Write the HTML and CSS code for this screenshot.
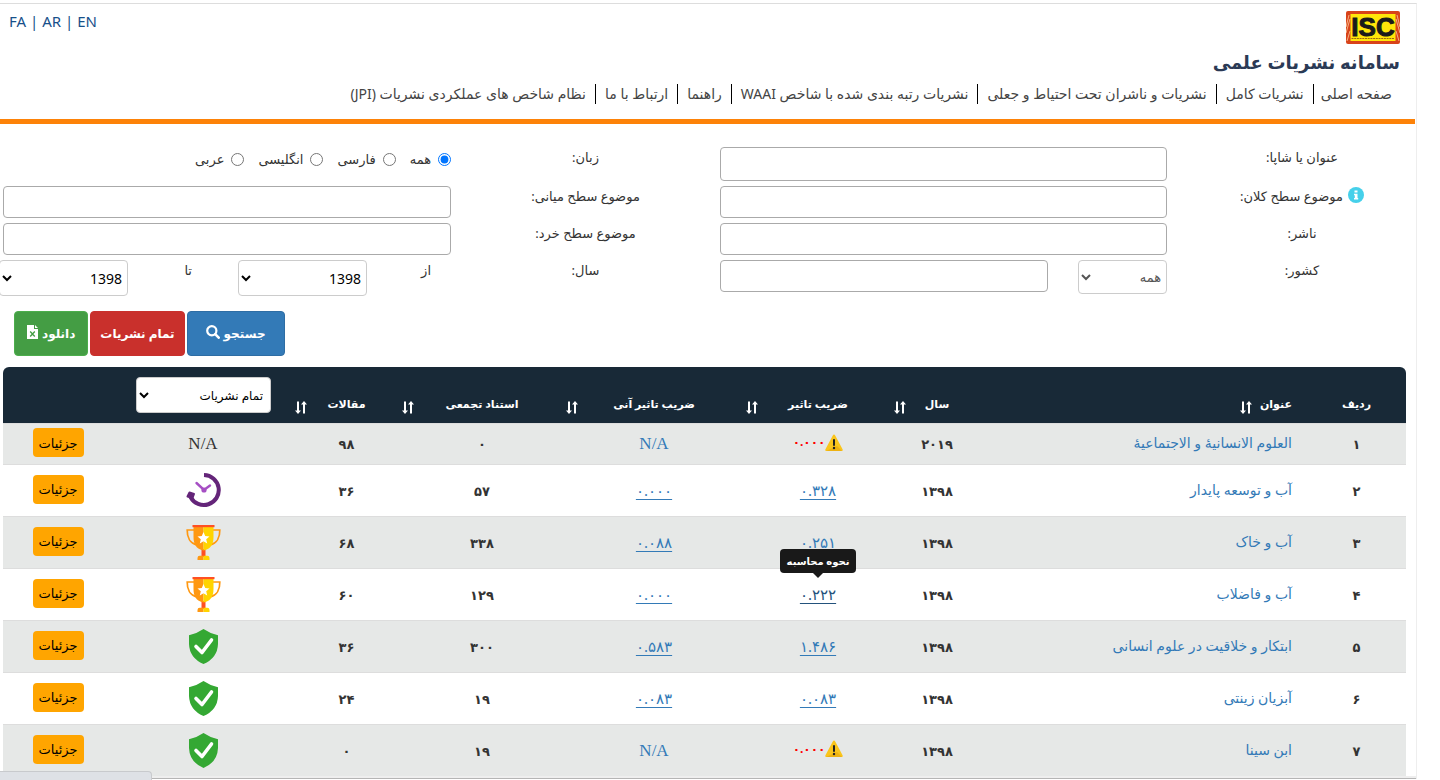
FILE: index.html
```html
<!DOCTYPE html>
<html lang="fa" dir="rtl">
<head>
<meta charset="utf-8">
<title>سامانه نشریات علمی</title>
<link rel="stylesheet" href="styles.css">
</head>
<body>
<svg class="defs" aria-hidden="true">
  <symbol id="sort" viewBox="0 0 12 13"><path d="M3 0.500V10M9 3V12.500" stroke="#fff" stroke-width="2" fill="none"/><path d="M0 9.500H6L3 13zM6 3.500H12L9 0z" fill="#fff"/></symbol>
  <symbol id="warn" viewBox="0 0 18 17"><path d="M9 0.500Q9.700 0.500 10.200 1.500L17.700 15.500Q18 17 16.800 17H1.200Q0 17 0.300 15.500L7.800 1.500Q8.300 0.500 9 0.500z" fill="#fac51c"/><path d="M1 17H17L12 12z" fill="#eeb211"/><path d="M9 6V11" stroke="#222" stroke-width="2" stroke-linecap="round"/><circle cx="9" cy="14" r="1.200" fill="#222"/></symbol>
  <symbol id="clock" viewBox="0 0 35 35"><path d="M18 2A15 15 0 1 1 4.500 24" fill="none" stroke="#642579" stroke-width="4"/><path d="M3.500 19.500L8 21L6.500 25L1.500 23.500z" fill="#642579" stroke="#642579" stroke-width="2" stroke-linejoin="round"/><path d="M10.500 10L18 17L24 12.500" fill="none" stroke="#a64fc4" stroke-width="2.400" stroke-linecap="round"/><circle cx="18" cy="17" r="2.600" fill="#a64fc4"/></symbol>
  <symbol id="cup" viewBox="0 0 35 35"><path d="M8 5H1.200C1 12 4 18.500 11 20" fill="none" stroke="#ff9811" stroke-width="1.700"/><path d="M27 5H33.800C34 12 31 18.500 24 20" fill="none" stroke="#ff9811" stroke-width="1.700"/><path d="M15.500 24H19.500V32H15.500z" fill="#ff5023"/><path d="M7.500 1.500H17.500V25.500C10 24 7.500 19 7.500 12z" fill="#ff9811"/><path d="M27.500 1.500H17.500V25.500C25 24 27.500 19 27.500 12z" fill="#ffd400"/><path d="M6.500 0H28.500V2.200H6.500z" fill="#ff5023"/><path d="M17.500 7L19.200 11L23.500 11.400L20.200 14.200L21.200 18.500L17.500 16.200L13.800 18.500L14.800 14.200L11.500 11.400L15.800 11z" fill="#fff"/><path d="M11.500 35V33Q11.500 30.800 13.700 30.800H17.500V35z" fill="#ff9811"/><path d="M23.500 35V33Q23.500 30.800 21.300 30.800H17.500V35z" fill="#ffd400"/></symbol>
  <symbol id="shield" viewBox="0 0 35 35"><path d="M17.500 0Q24 4.500 32 6.200V15Q31.500 29 17.500 35Q3.500 29 3 15V6.200Q11 4.500 17.500 0z" fill="#34a833"/><path d="M10 17.500L16 23.500L25.500 11" fill="none" stroke="#fff" stroke-width="3.600" stroke-linecap="round" stroke-linejoin="round"/></symbol>
</svg>
<div class="page">
  <header class="header">
    <div class="brand">
      <svg class="logo" viewBox="0 0 54 33" role="img" aria-label="ISC"><rect width="54" height="33" rx="2" fill="#d8431a"/><path d="M0 16L3 4M0 22L4 8M54 16L51 4M54 22L50 8M1 30L4 20M53 30L50 20" stroke="#f4b183" stroke-width="1"/><rect x="4.500" y="3" width="45" height="27" fill="#ffe60a"/><text x="27" y="25" text-anchor="middle" class="logo-text">ISC</text><path d="M5.500 27.500H48.500" stroke="#9a6a10" stroke-width="1.200" stroke-dasharray="2 0.700"/></svg>
      <h1 class="site-title">سامانه نشریات علمی</h1>
    </div>
    <div class="langs" dir="ltr"><a href="#">FA</a> | <a href="#">AR</a> | <a href="#">EN</a></div>
  </header>
  <nav class="nav">
    <a href="#">صفحه اصلی</a><a href="#">نشریات کامل</a><a href="#">نشریات و ناشران تحت احتیاط و جعلی</a><a href="#">نشریات رتبه بندی شده با شاخص WAAI</a><a href="#">راهنما</a><a href="#">ارتباط با ما</a><a href="#">نظام شاخص های عملکردی نشریات (JPI)</a>
  </nav>
  <form class="search">
    <div class="fields">
      <label class="first" for="title">عنوان یا شاپا:</label>
      <input class="box tall" id="title" type="text">
      <span class="caption" id="lang-label">زبان:</span>
      <div class="radios" role="radiogroup" aria-labelledby="lang-label">
        <label><input type="radio" name="lang" checked>همه</label>
        <label><input type="radio" name="lang">فارسی</label>
        <label><input type="radio" name="lang">انگلیسی</label>
        <label><input type="radio" name="lang">عربی</label>
      </div>

      <label class="first" for="macro"><svg class="info" viewBox="0 0 16 16"><circle cx="8" cy="8" r="8" fill="#46d0ea"/><path d="M6.500 3.500H9.500V5.500H6.500zM6 6.800H9.500V11H10.200V12.500H6V11H6.800V8.200H6z" fill="#fff"/></svg>موضوع سطح کلان:</label>
      <input class="box" id="macro" type="text">
      <label for="mid">موضوع سطح میانی:</label>
      <input class="box" id="mid" type="text">

      <label class="first" for="publisher">ناشر:</label>
      <input class="box" id="publisher" type="text">
      <label for="micro">موضوع سطح خرد:</label>
      <input class="box" id="micro" type="text">

      <label class="first" for="country">کشور:</label>
      <div class="country">
        <select class="select muted" id="country"><option>همه</option></select>
        <input class="box" type="text" aria-label="کشور">
      </div>
      <span class="caption">سال:</span>
      <div class="years">
        <label for="from">از</label>
        <select class="select" id="from"><option>1398</option></select>
        <label for="to">تا</label>
        <select class="select" id="to"><option>1398</option></select>
      </div>
    </div>
    <div class="actions">
      <button type="button" class="btn blue">جستجو <svg class="mag" viewBox="0 0 14 14"><circle cx="5.800" cy="5.800" r="4.600" fill="none" stroke="#fff" stroke-width="2.200"/><path d="M9.200 9.200L12.700 12.700" stroke="#fff" stroke-width="2.600" stroke-linecap="round"/></svg></button>
      <button type="button" class="btn red">تمام نشریات</button>
      <button type="button" class="btn green">دانلود <svg class="xls" viewBox="0 0 11 14"><path d="M0 0H7V4H11V14H0zM8 0L11 3H8z" fill="#fff"/><path d="M3.200 6.500L7.800 11.500M7.800 6.500L3.200 11.500" stroke="#449d44" stroke-width="1.300"/></svg></button>
    </div>
  </form>
  <table class="journals">
    <colgroup><col class="c-row"><col class="c-title"><col class="c-year"><col class="c-if"><col class="c-imm"><col class="c-agg"><col class="c-art"><col class="c-rank"><col class="c-more"></colgroup>
    <thead>
      <tr>
        <th>ردیف</th>
        <th class="name"><div class="head start">عنوان<svg class="sort"><use href="#sort"/></svg></div></th>
        <th><div class="head">سال<svg class="sort"><use href="#sort"/></svg></div></th>
        <th><div class="head">ضریب تاثیر<svg class="sort"><use href="#sort"/></svg></div></th>
        <th><div class="head">ضریب تاثیر آنی<svg class="sort"><use href="#sort"/></svg></div></th>
        <th><div class="head">استناد تجمعی<svg class="sort"><use href="#sort"/></svg></div></th>
        <th><div class="head">مقالات<svg class="sort"><use href="#sort"/></svg></div></th>
        <th class="filter"><select class="select rank" aria-label="رتبه"><option>تمام نشریات</option></select></th>
        <th></th>
      </tr>
    </thead>
    <tbody>
      <tr class="short"><td>۱</td><td class="name"><a href="#">العلوم الانسانیۀ و الاجتماعیۀ</a></td><td>۲۰۱۹</td><td><span class="bad"><svg class="warn"><use href="#warn"/></svg>۰.۰۰۰</span></td><td><a class="na" href="#">N/A</a></td><td>۰</td><td>۹۸</td><td class="na">N/A</td><td><button type="button" class="more">جزئیات</button></td></tr>
      <tr><td>۲</td><td class="name"><a href="#">آب و توسعه پایدار</a></td><td>۱۳۹۸</td><td><a class="num" href="#">۰.۳۲۸</a></td><td><a class="num" href="#">۰.۰۰۰</a></td><td>۵۷</td><td>۳۶</td><td><svg class="badge"><use href="#clock"/></svg></td><td><button type="button" class="more">جزئیات</button></td></tr>
      <tr><td>۳</td><td class="name"><a href="#">آب و خاک</a></td><td>۱۳۹۸</td><td><a class="num" href="#">۰.۲۵۱</a></td><td><a class="num" href="#">۰.۰۸۸</a></td><td>۳۳۸</td><td>۶۸</td><td><svg class="badge"><use href="#cup"/></svg></td><td><button type="button" class="more">جزئیات</button></td></tr>
      <tr><td>۴</td><td class="name"><a href="#">آب و فاضلاب</a></td><td>۱۳۹۸</td><td><a class="num active" href="#">۰.۲۲۲<span class="tip" role="tooltip">نحوه محاسبه</span></a></td><td><a class="num" href="#">۰.۰۰۰</a></td><td>۱۲۹</td><td>۶۰</td><td><svg class="badge"><use href="#cup"/></svg></td><td><button type="button" class="more">جزئیات</button></td></tr>
      <tr><td>۵</td><td class="name"><a href="#">ابتکار و خلاقیت در علوم انسانی</a></td><td>۱۳۹۸</td><td><a class="num" href="#">۱.۴۸۶</a></td><td><a class="num" href="#">۰.۵۸۳</a></td><td>۳۰۰</td><td>۳۶</td><td><svg class="badge"><use href="#shield"/></svg></td><td><button type="button" class="more">جزئیات</button></td></tr>
      <tr><td>۶</td><td class="name"><a href="#">آبزیان زینتی</a></td><td>۱۳۹۸</td><td><a class="num" href="#">۰.۰۸۳</a></td><td><a class="num" href="#">۰.۰۸۳</a></td><td>۱۹</td><td>۲۴</td><td><svg class="badge"><use href="#shield"/></svg></td><td><button type="button" class="more">جزئیات</button></td></tr>
      <tr><td>۷</td><td class="name"><a href="#">ابن سینا</a></td><td>۱۳۹۸</td><td><span class="bad"><svg class="warn"><use href="#warn"/></svg>۰.۰۰۰</span></td><td><a class="na" href="#">N/A</a></td><td>۱۹</td><td>۰</td><td><svg class="badge"><use href="#shield"/></svg></td><td><button type="button" class="more">جزئیات</button></td></tr>
    </tbody>
  </table>
  <div class="edge"></div>
</div>
<div class="status"></div>
</body>
</html>
```

FILE: styles.css
```css
* { box-sizing: border-box; }
body {
  margin: 0;
  height: 100vh;
  overflow: hidden;
  background: #fff;
  color: #333;
  font: 13px/20px "Noto Sans", "DejaVu Sans", sans-serif;
}
.defs { display: none; }
a { color: #337ab7; text-decoration: none; }
input, select, button { font-family: inherit; }
.page {
  margin: 3px 23px 0 0;
  border-top: 1px solid #ddd;
  border-right: 1px solid #eee;
}
.header {
  display: flex;
  justify-content: space-between;
  padding: 7px 16px 0 9px;
}
.brand { display: flex; flex-direction: column; align-items: flex-start; }
.logo { width: 54px; height: 33px; }
.logo-text { font: 900 26px "Liberation Sans", sans-serif; fill: #1a1a1a; stroke: #1a1a1a; stroke-width: 1; }
.site-title { margin: 0; font-size: 18px; line-height: 36px; color: #2b3a55; }
.langs { color: #17508a; font-size: 15px; line-height: 21px; }
.langs a { color: #17508a; }
.nav {
  display: flex;
  margin-right: 1px;
  padding: 4px 14px 15px 0;
  border-bottom: 5px solid #fd8208;
}
.nav a { padding: 0 9px; color: #444; font-size: 14px; line-height: 20px; white-space: nowrap; }
.nav a:first-child { padding-left: 7px; }
.nav a + a { border-right: 1px solid #000; }

.fields {
  display: grid;
  grid-template-columns: 248fr 447fr 269fr 448fr;
  row-gap: 5px;
  padding: 23px 1px 0 3px;
}
.fields > label, .caption { text-align: center; font-size: 13px; line-height: 21px; }
.fields > .first { margin-right: -22px; }
.box {
  width: 100%;
  height: 32px;
  border: 1px solid #aaa;
  border-radius: 4px;
  background: #fff;
}
.tall { height: 34px; }
.info { width: 16px; height: 16px; margin-left: 5px; vertical-align: -2px; }
.radios { display: flex; gap: 14px; font-size: 13px; line-height: 24px; }
.radios label { display: flex; align-items: center; align-self: flex-start; gap: 7px; }
.radios input { width: 13px; height: 13px; margin: 0; }
.country { display: grid; grid-template-columns: 89fr 328fr; column-gap: 30px; }
.select {
  width: 100%;
  height: 36px;
  padding: 0 1px 0 3px;
  border: 1px solid #ccc;
  border-radius: 4px;
  background: #fff;
  color: #000;
  font-size: 14px;
}
.muted { height: 34px; color: #555; font-size: 13px; }
.years {
  display: grid;
  grid-template-columns: 84fr 129fr 110fr 129fr;
  margin-left: -4px;
}
.years label { font-size: 13px; line-height: 21px; }
.years label:first-child { padding-right: 20px; }
.years label:nth-of-type(2) { padding-right: 46px; }
.actions { display: flex; justify-content: flex-end; gap: 2px; padding: 15px 0 11px 14px; }
.btn {
  display: flex;
  align-items: center;
  justify-content: center;
  gap: 4px;
  height: 45px;
  padding: 0 9px;
  border: 1px solid;
  border-radius: 4px;
  color: #fff;
  font-size: 12px;
  font-weight: 700;
}
.blue { padding: 0 18px; background: #337ab7; border-color: #2e6da4; }
.red { background: #c9302c; border-color: #c9302c; }
.green { padding: 0 12px; background: #449d44; border-color: #4cae4c; }
.mag { width: 14px; height: 14px; margin-bottom: 3px; }
.xls { width: 11px; height: 14px; margin-bottom: 3px; }

.journals {
  width: calc(100% - 13px);
  margin: 0 10px 0 3px;
  table-layout: fixed;
  border-collapse: separate;
  border-spacing: 0;
  text-align: center;
}
.c-row { width: 99px; }
.c-title { width: 325px; }
.c-year { width: 90px; }
.c-if { width: 148px; }
.c-imm { width: 180px; }
.c-agg { width: 164px; }
.c-art { width: 107px; }
.c-rank { width: 180px; }
.c-more { width: 110px; }
th {
  height: 56px;
  padding: 0 0 9px;
  vertical-align: bottom;
  background: #182937;
  color: #fff;
  font-size: 11px;
}
th:first-child { border-top-right-radius: 6px; }
th:last-child { border-top-left-radius: 6px; }
.head { display: grid; grid-template-columns: 1fr auto 1fr; align-items: center; white-space: nowrap; }
.head::before { content: ""; }
.head .sort { justify-self: end; margin-left: 2px; }
.start { display: flex; gap: 8px; }
.start::before { display: none; }
.sort { width: 12px; height: 13px; margin-top: 6px; }
th.filter { padding: 0 22px 10px 23px; }
.rank { display: block; font-size: 12px; padding: 0 3px; }
td {
  height: 52px;
  padding: 0;
  border-top: 1px solid #ddd;
  font-size: 13px;
  font-weight: 700;
}
.short td { height: 41px; }
tbody tr:nth-child(odd) { background: #e6e8e7; }
.name { padding-right: 15px; text-align: right; }
td.name { padding-bottom: 2px; font-size: 14px; font-weight: 400; }
.num { position: relative; font-size: 15px; font-weight: 400; text-decoration: underline; text-underline-offset: 3px; }
.num.active { color: #23527c; }
td .na, td.na { font: 17px/20px "Liberation Serif", serif; }
.bad { display: inline-flex; align-items: center; color: #f00; font-size: 12px; }
.warn { width: 18px; height: 17px; }
.badge { display: block; width: 35px; height: 35px; margin: 0 auto; }
.more {
  display: block;
  height: 29px;
  width: 51px;
  margin: 0 auto;
  padding: 0;
  border: 0;
  border-radius: 4px;
  background: #ffa500;
  color: #000;
  font-size: 13px;
}
td:last-child { padding-bottom: 3px; }
.tip {
  position: absolute;
  bottom: 31px;
  left: 50%;
  width: 76px;
  margin-left: -38px;
  border-radius: 4px;
  background: #191919;
  color: #fff;
  font-size: 10px;
  font-weight: 700;
  line-height: 24px;
  text-align: center;
  white-space: nowrap;
}
.tip::after {
  content: "";
  position: absolute;
  top: 100%;
  left: 50%;
  margin-left: -5px;
  border: 5px solid transparent;
  border-top-color: #191919;
  border-bottom: 0;
}
.edge { height: 3px; background: #eee; border-bottom: 1px solid #b5b5b5; }
.status {
  position: fixed;
  left: 0;
  bottom: 0;
  width: 152px;
  height: 9px;
  border: 1px solid #c8cacd;
  border-width: 1px 1px 0 0;
  border-top-right-radius: 4px;
  background: #dee1e6;
}
```
